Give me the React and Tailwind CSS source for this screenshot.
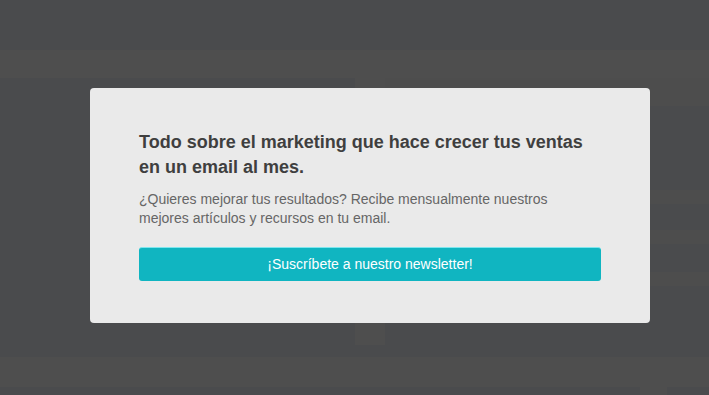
import React from 'react';

const stripes = [
  { h: 28, light: true },
  { h: 84, light: false },
  { h: 14, light: true },
  { h: 26, light: false },
  { h: 14, light: true },
  { h: 28, light: false },
  { h: 14, light: true },
  { h: 26, light: false },
  { h: 33, light: false },
];

const NewsletterModal = () => (
  <div className="absolute left-[90px] top-[88px] w-[560px] h-[235px] rounded-[4px] bg-[#eaeaea] px-[49px] pt-[42px] font-['Liberation_Sans',Arial,sans-serif]">
    <h2 className="text-[18px] leading-[25px] font-bold text-[#3f3f3f]">
      Todo sobre el marketing que hace crecer tus ventas en un email al mes.
    </h2>
    <p className="mt-[10px] text-[14px] leading-[19px] text-[#666666]">
      ¿Quieres mejorar tus resultados? Recibe mensualmente nuestros mejores artículos y recursos en tu email.
    </p>
    <button className="mt-[19px] w-full h-[34px] rounded-[3px] bg-[#10b5c1] border-t border-[#7fe6ee] text-[14px] text-white">
      ¡Suscríbete a nuestro newsletter!
    </button>
  </div>
);

export default function App() {
  return (
    <div className="relative w-full h-[395px] overflow-hidden bg-[#4a4b4d]">
      <div className="h-[50px]" />
      <div className="h-[28px] bg-[#4e4e4e]" />
      <div className="flex h-[279px]">
        <div className="w-[355px]" />
        <div className="flex flex-col w-[30px]">
          <div className="h-[267px] bg-[#4e4e4e]" />
        </div>
        <div className="flex-1 flex flex-col">
          {stripes.map((s, i) => (
            <div key={i} style={{ height: s.h }} className={s.light ? 'bg-[#4d4d4d]' : ''} />
          ))}
        </div>
      </div>
      <div className="h-[30px] bg-[#4e4e4e]" />
      <div className="flex h-[8px]">
        <div className="w-[640px]" />
        <div className="w-[27px] bg-[#4e4e4e]" />
      </div>
      <NewsletterModal />
    </div>
  );
}
